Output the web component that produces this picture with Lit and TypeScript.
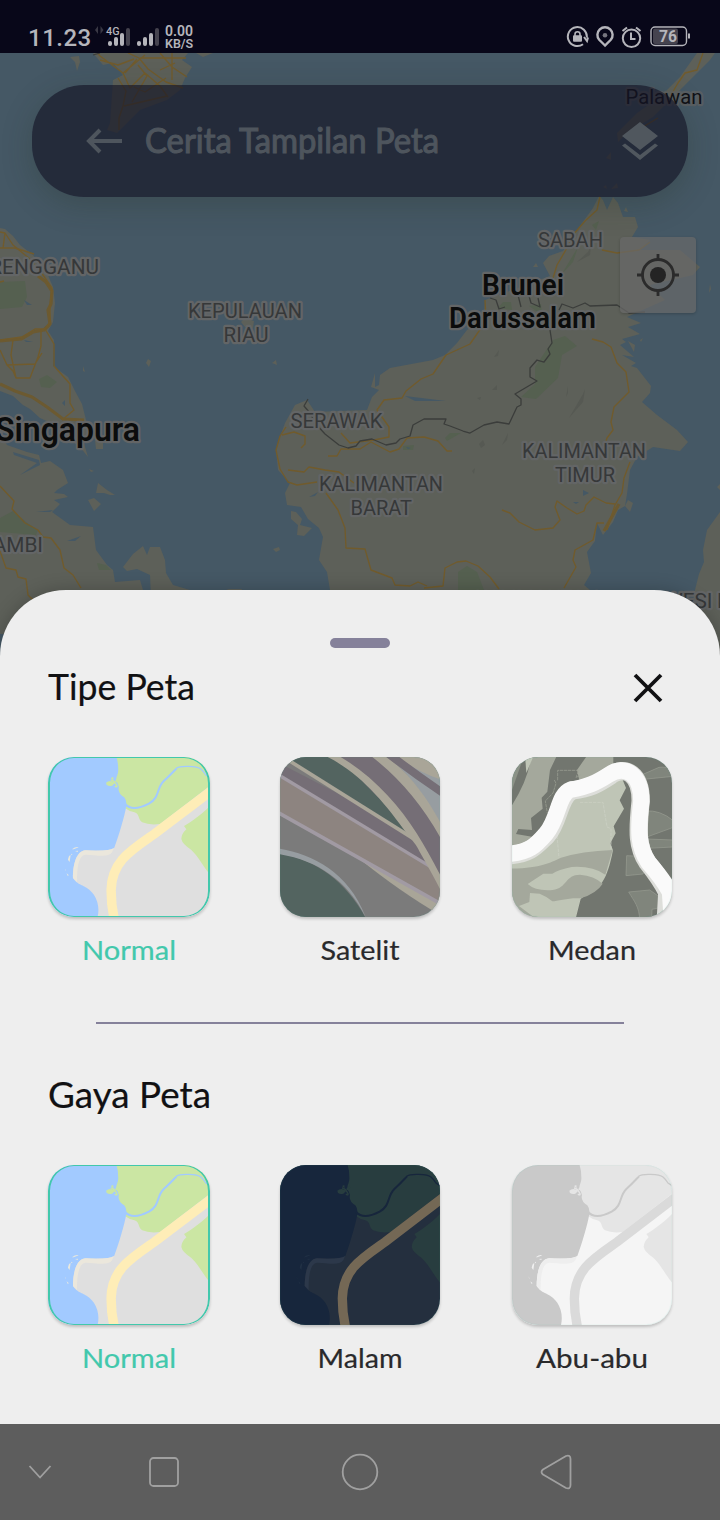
import { LitElement, html, svg, css } from "lit";
import { customElement, property } from "lit/decorators.js";

type Palette = { land: string; sea: string; park: string; road: string; shore: string; foam: string };

const PALETTES: Record<string, Palette> = {
  normal: { land: "#dfdfdf", sea: "#a2caff", park: "#cbe6a3", road: "#feedb7", shore: "#ebe7dc", foam: "#e8e8de" },
  night: { land: "#242f3e", sea: "#17263c", park: "#283d3f", road: "#746855", shore: "#2c384a", foam: "#203044" },
  gray: { land: "#f5f5f5", sea: "#c9c9c9", park: "#e5e5e5", road: "#dadada", shore: "#eeeeee", foam: "#efefef" },
};

const coastArt = (p: Palette) => svg`
  <g transform="translate(-58 -51)">
    <path fill=${p.land} d="M50 40H550V540H50Z"/>
    <path fill=${p.park} d="M255 40H550V128L390 252Q358 256 337 247C324 238 330 222 314 217Q298 214 287 205L240 150Z"/>
    <path fill=${p.park} d="M550 186C520 218 488 243 461 258L468 268Q453 282 453 297Q456 312 482 329C510 356 516 380 550 418Z"/>
    <path fill=${p.sea} d="M50 40H256Q266 58 266 88C268 105 253 116 264 130L268 141Q263 158 284 172Q292 182 290 198C284 233 268 286 254 324Q245 334 170 331C143 333 132 370 132 414C149 441 170 431 194 464Q215 497 203 540H50Z"/>
    <path fill=${p.shore} d="M253 324Q238 335 168 331C142 334 132 374 132 414L144 426Q143 346 169 344C198 344 235 355 248 337Z"/>
    <path fill="none" stroke=${p.sea} stroke-width="6" d="M286 192C306 214 338 201 357 191C391 171 378 146 401 123C420 106 432 92 439 85"/>
    <path fill="none" stroke=${p.sea} stroke-width="4" d="M438 85C448 76 500 78 511 87Q519 94 526 105L550 121"/>
    <path fill="none" stroke=${p.road} stroke-width="28" d="M561 138L373 282C305 330 246 364 245 451Q245 503 258 552"/>
    <g fill=${p.park}>
      <path d="M230 128Q241 118 257 128L248 137Q232 141 230 128Z"/>
      <path d="M244 114L251 111 252 121ZM256 124L266 113 269 119 261 127ZM254 139Q262 133 265 141L259 143Z"/>
    </g>
    <path fill="none" stroke=${p.park} stroke-width="4" d="M244 120Q255 121 263 139"/>
    <g fill=${p.foam}>
      <path d="M129 328Q141 319 149 322L134 328ZM138 333L147 332 146 336ZM126 343Q132 339 129 346ZM117 359Q120 345 125 346L122 366ZM108 385L111 393 109 391ZM113 400L120 406 116 407Z"/>
    </g>
  </g>`;

const satelliteArt = svg`
  <g transform="translate(-60 -51)">
    <path fill="#7b7b7b" d="M50 40H550V540H50Z"/>
    <path fill="#536460" d="M50 340C165 354 262 427 320 540H50Z"/>
    <path fill="#979da1" d="M50 325C150 340 263 391 317 531C260 418 169 359 50 341Z"/>
    <path fill="#a9a598" d="M290 350L550 475V530Q429 462 290 350Z"/>
    <path fill="#8d8480" d="M50 95L550 405V496L50 212Z"/>
    <path fill="none" stroke="#a19aa3" stroke-width="11" d="M48 214L550 496"/>
    <path fill="#756e76" d="M50 65L470 283 510 374 50 102Z"/>
    <path fill="none" stroke="#a19aa3" stroke-width="10" d="M50 101L515 382"/>
    <path fill="#536460" d="M80 40H210C300 91 383 180 447 287L94 65Z"/>
    <path fill="none" stroke="#a9a598" stroke-width="11" d="M78 56L470 302"/>
    <path fill="#756e76" d="M225 40H360L550 270V420L470 290Z"/>
    <path fill="#a9a598" d="M184 42H226C330 98 415 192 470 280Q510 344 550 424V466Q512 393 478 334C472 318 456 301 442 283C371 184 296 92 184 42Z"/>
    <path fill="#979da1" d="M370 40L550 118V270Q477 123 370 40Z"/>
    <path fill="#a9a598" d="M325 42H369C447 96 503 174 550 264V309Q461 143 325 42Z"/>
    <path fill="#a9a598" d="M405 40H550V121Q497 106 430 64Z"/>
    <path fill="none" stroke="#756e76" stroke-width="24" d="M376 34Q464 102 552 161"/>
  </g>`;

const terrainArt = svg`
  <g transform="translate(-66 -51)">
    <path fill="#72766f" d="M60 40H560V540H60Z"/>
    <path fill="#a4a89c" d="M124 40H204L180 90 172 155 155 173 158 206 123 234 126 270 85 267 78 282 126 290 110 318 60 330V205Q119 115 124 40Z"/>
    <path fill="#8c9287" d="M60 115L85 70 96 65 66 150Z"/>
    <path fill="#bfc5b6" d="M106 58L132 45 109 99Z"/>
    <path fill="#a4a89c" d="M296 40H370V74L270 130 261 90Z"/>
    <path fill="#bfc5b6" d="M60 335L150 310 235 165 390 100 408 144 389 181 402 206 371 259 377 280 361 310 369 331C360 375 346 448 290 463L272 477 256 540H60Z"/>
    <path fill="#a4a89c" d="M60 386C155 384 177 369 213 353Q274 334 368 330L346 404Q307 377 245 381Q205 389 187 401H160L113 432Q137 454 188 450C232 444 225 404 270 404Q312 407 338 431Q321 459 272 475C240 472 203 483 187 484Q170 469 149 461L120 459 118 486 87 498 136 535H60Z"/>
    <path fill="#80857c" stroke="#989d92" stroke-width="2" d="M452 106L507 82Q532 79 550 91V109L470 117ZM466 213Q510 209 550 242V262L468 292ZM471 297L550 300V321L471 325ZM410 347L432 348 464 390 459 402 408 407ZM416 456L479 450 515 475 515 502 486 508 485 540H449C448 500 433 485 416 456Z"/>
    <path fill="none" stroke="#a0a597" stroke-width="2" stroke-dasharray="10 2" d="M203 121V91H266L258 113 273 104M193 120L198 130 189 159 166 183 172 219"/>
    <path fill="none" stroke="#cdd2c6" stroke-width="2" stroke-dasharray="10 3" d="M201 287L207 353M270 187L339 187 351 261 363 266 363 330"/>
    <path fill="none" stroke="#dddeda" stroke-width="55" d="M53 346C123 341 137 319 171 286C208 246 207 166 248 151C301 145 321 133 358 109C408 71 453 105 452 184C442 276 442 321 472 367Q512 417 532 457L527 550"/>
    <path fill="none" stroke="#fafafa" stroke-width="49" d="M53 342C119 337 138 316 168 281C207 235 203 163 242 149C294 140 321 127 355 105C407 70 454 105 454 184C443 276 445 321 475 367Q518 416 540 456L546 550"/>
  </g>`;

const ROADS = [
  "M0 232L5 233 13 245 30 259 43 275 52 288 50 305 50 322 45 329 35 329 22 337 0 340",
  "M0 248H15L34 254M5 233L3 248M0 282L4 281M0 350L7 365 13 371 16 378 30 378 38 357 41 346 41 329M7 365L35 364 42 353M13 340L11 355 16 378",
  "M45 329L54 344V366L70 384V403L74 410 62 420",
  "M0 486L14 501 12 509 25 523 38 530 43 537 51 538 60 550 64 568 73 575 81 588",
  "M0 551L6 568 16 570 18 577 26 579 28 595 33 600",
  "M282 435L294 432 305 436 305 444 301 448",
  "M286 427L280 436 276 450 280 469 288 482 297 485 317 482M288 470L304 472 309 467 325 470 339 472 354 483M328 456L337 456 341 449 360 449 371 442 390 452 399 449 407 438 424 437 438 441 447 451 452 451",
  "M341 433L350 443 374 440 389 437 389 427 377 410 384 400 402 398 406 391 421 379 433 374 446 355 470 344 486 321 485 300",
  "M553 278L557 265 567 248 572 236 585 221 597 210 600 197M602 250L617 253 639 250 650 242",
  "M326 493L338 510 345 528 346 548 365 549 367 556 371 570 392 578 395 585 410 586 418 582 427 586",
  "M424 588L443 586 445 568 457 562 466 561 478 566 490 577 499 589",
  "M592 339L603 342 611 347 617 363 626 372 629 392 614 407 611 422 613 430 607 438 602 454M630 462L624 478 622 493 615 505 607 530",
  "M502 510L510 513 519 522 535 530 553 528 560 520 555 507 557 501 567 508 577 514 584 511 586 505 594 497 606 503 615 504M604 523L597 523 593 540 575 550 573 560 576 567 564 588",
  "M88 41L100 56 123 73 130 88 145 73 160 86 168 97M128 53L139 58 148 69 166 82 183 88M123 73L145 55M160 53L172 67 187 77M100 60L118 65 134 59M137 59L125 73M118 78L126 91 123 106 119 118 119 130M124 106L167 96M132 102L147 76 138 65M160 70L175 63M134 87L145 92 166 78M140 58H186M172 53V80",
  "M703 53L697 70 685 73 678 83 671 95M658 118L641 128 627 135",
];

const TRUNKS = [
  "M38 276L46 282 52 291 51 304 48 310 50 324 44 330 33 332 21 339 0 341",
  "M0 384L15 391 32 397 47 407 63 419 84 420",
  "M619 504L604 531",
];

const LABELS: { t: string; x: number; y: number; w?: number; a?: string; c?: string }[] = [
  { t: "TERENGGANU", x: 99, y: 274, a: "end" },
  { t: "KEPULAUAN", x: 188, y: 318, w: 114 },
  { t: "RIAU", x: 223.5, y: 342, w: 45 },
  { t: "SERAWAK", x: 290.5, y: 428, w: 92 },
  { t: "KALIMANTAN", x: 319, y: 491, w: 124 },
  { t: "BARAT", x: 350.5, y: 515, w: 61.5 },
  { t: "KALIMANTAN", x: 522, y: 458, w: 124 },
  { t: "TIMUR", x: 555, y: 482, w: 60 },
  { t: "SABAH", x: 538, y: 247, w: 65 },
  { t: "JAMBI", x: 43, y: 552, a: "end" },
  { t: "KALIMANTAN", x: 475, y: 607, w: 124 },
  { t: "SULAWESI", x: 712.5, y: 608, a: "end" },
  { t: "BARAT", x: 717, y: 608 },
  { t: "Palawan", x: 625.5, y: 104, w: 77, c: "place" },
  { t: "Singapura", x: 140, y: 441, w: 145, a: "end", c: "big" },
  { t: "Brunei", x: 482, y: 295, w: 82, c: "country" },
  { t: "Darussalam", x: 449, y: 328, w: 147, c: "country" },
];

@customElement("map-backdrop")
export class MapBackdrop extends LitElement {
  static styles = css`
    :host { display: block; }
    svg { display: block; }
    .land { fill: #5d6059; }
    .park { fill: #556050; }
    .water { fill: #455865; }
    .road { fill: none; stroke: #715b2c; stroke-width: 1.35; stroke-linejoin: round; }
    .trunk { fill: none; stroke: #6c5a31; stroke-width: 3.2; stroke-linejoin: round; }
    .border { fill: none; stroke: #3b3d3b; stroke-width: 1.3; stroke-linejoin: round; }
    .hill { fill: #565953; }
    text { font-family: Roboto, sans-serif; font-size: 20.8px; fill: #363839; stroke: #636566; stroke-width: 4.5px; stroke-linejoin: round; paint-order: stroke; }
    .place { fill: #101116; stroke: rgba(95,97,98,.75); }
    .country { font-size: 29.5px; font-weight: 600; fill: #0b0c0c; }
    .big { font-size: 33px; font-weight: 600; fill: #0b0c0c; }
  `;
  render() {
    return html`<svg width="720" height="700" viewBox="0 53 720 700">
      <path class="water" d="M0 53H720V753H0Z"/>
      <g class="land">
        <path d="M93 53L103 65 113 63 123 75 113 80 110 123 107 130 117 133 130 120 140 110 167 100 180 90 185 78 192 67 182 60 188 53ZM70 57L79 56 80 62 77 71 75 62ZM196 53L203 57 213 53Z"/>
        <path d="M697 53L680 77 660 97 637 113 617 133 618 142 627 133 653 117 670 100 697 73 710 60 715 53ZM606 158L611 152 611 160ZM611 189L617 183 618 188ZM603 187L606 185 607 189ZM624 211L626 207 628 212Z"/>
        <path d="M0 228L5 229 13 236 20 245 33 255 47 273 53 287 55 303 53 322 48 331 54 340 53 366 68 377 75 391 82 404 87 424 88 435 83 440 88 457 80 447 66 437 53 424 40 418 30 409 23 405 13 396 0 391ZM95 440L103 443 103 449 96 449Z"/>
        <path d="M0 433L7 445 27 452 39 455 41 463 50 461 63 470 68 483 57 490 54 493 64 494 68 497 54 500 60 504 52 512 70 525 93 527 96 550 107 565 113 570 115 582 140 580 143 590 140 634H0Z"/>
        <path d="M123 567L133 554 143 546 147 555 150 547 160 547 165 560 166 573 173 585 190 590V620H152L150 575 137 569 127 571ZM88 500L94 498 101 504 94 511ZM98 483L107 490 115 495 110 495 104 493 96 493ZM89 469L94 471 91 472ZM146 363L148 359 151 361 149 367ZM83 366L85 372 83 371ZM241 322L245 318 254 321 253 328 245 327ZM272 363L276 360 277 365ZM273 549L279 547 280 550 276 552ZM226 589L242 589 240 594Z"/>
        <path d="M307 400L295 405 285 423 280 437 276 450 278 470 290 483 285 493 287 505 301 507 308 519 319 528 323 537 319 560 327 572 330 590V680H592L590 590 584 585 591 573 587 552 595 541 597 523 603 535 613 522 618 510 625 506 627 494 630 470 637 457 653 447 680 451 688 442 677 430 657 415 642 402 650 393 651 386 637 368 631 366 636 363 622 355 634 357 620 345 626 342 622 339 640 334 628 327 641 323 627 317 647 308 665 300 650 285 693 275 700 267 680 250 640 250 650 240 632 237 638 227 635 217 623 217 618 203 613 197 607 210 603 200 599 196 593 208 572 237 563 251 549 256 543 263 550 276 485 300 484 315 467 330 457 343 445 355 433 360 390 368 380 375 379 385 375 387 375 373 371 387 379 390 372 397 367 410 340 411 315 412Z"/>
        <path d="M291 511L296 512 302 519 300 525 312 528 304 536 297 535 298 525 291 519ZM628 341L635 345 634 352ZM628 500L633 503 630 512 625 506ZM640 340L643 338 641 342ZM710 284L711 289 709 293ZM533 267L536 263 538 267Z"/>
        <path d="M720 512L707 530 703 550 704 562 699 574 695 590 690 620 690 670H720ZM717 487L720 484V490Z"/>
      </g>
      <g class="park">
        <path d="M0 282L25 281 27 297 22 307 0 309ZM39 379L47 375 57 382 50 388 41 387ZM0 518L13 511 26 522 38 530 36 535 0 532ZM97 563L106 565 111 570 99 570Z"/>
        <path d="M565 336L577 346 562 355 558 378 536 399 521 397 535 384 535 367 553 340ZM503 302L511 302 512 310 498 308ZM529 306L541 304 542 315ZM566 267L578 247 573 262 561 275ZM592 225L599 221 596 230ZM445 438L450 433 461 433 447 441ZM403 446L414 445 413 450 403 450ZM458 572L467 566 477 572 484 590H458Z"/>
      </g>
      <g class="hill">
        <path d="M494 357L499 350 498 356ZM492 390L497 385 497 390ZM477 398L481 397 480 400ZM566 397L568 386 568 393ZM569 418L583 394 585 389 583 402ZM479 444L483 440 485 445 481 448ZM502 445L508 433 507 440ZM472 471L475 468 474 474ZM577 262L588 252 591 246 590 255Z"/>
      </g>
      <g class="water">
        <path d="M24 300L32 305 27 305ZM62 403L65 400 65 406ZM13 452L39 460 40 465 20 475 37 463 14 455ZM36 512L53 510 50 512ZM67 541L81 536 75 541ZM309 497L318 492 315 496ZM359 522L363 516 361 519ZM583 490L589 493 583 496ZM573 502L579 502 576 504ZM24 340L33 342 26 342Z"/>
        <path d="M405 396L446 401 415 401ZM406 447L411 448 408 449Z"/>
      </g>
      ${TRUNKS.map((d) => svg`<path class="trunk" d=${d}/>`)}
      ${ROADS.map((d) => svg`<path class="road" d=${d}/>`)}
      <path class="border" d="M308 399L304 406 310 413 315 423 325 434 339 445 348 448 356 446 360 441 372 439 386 445 396 443 400 439 410 436 413 425 424 419 446 419 444 424 450 426 463 431 470 433 484 425 497 422 509 424 517 407 521 405 521 399 515 394 537 381 530 377 530 368 537 360 544 362 550 354 548 349 552 343 550 330 553 325M559 310L562 304 573 308 585 303 590 306 617 305 629 313 645 312M490 298L496 300 499 309 505 307M518 295L521 307M529 296L531 303 540 307 538 298"/>
      <path class="border" d="M93 55L100 53"/>
      ${LABELS.map((l) => l.w
        ? svg`<text class=${l.c ?? "region"} x=${l.x} y=${l.y} text-anchor=${l.a ?? "start"} textLength=${l.w} lengthAdjust="spacingAndGlyphs">${l.t}</text>`
        : svg`<text class=${l.c ?? "region"} x=${l.x} y=${l.y} text-anchor=${l.a ?? "start"}>${l.t}</text>`)}
    </svg>`;
  }
}

@customElement("status-bar")
export class StatusBar extends LitElement {
  static styles = css`
    :host { display: flex; height: 53px; box-sizing: border-box; padding: 22px 29px 0 28px; justify-content: space-between; background: #080719; color: #b5b5bb; font-family: Roboto, sans-serif; }
    .side { display: flex; align-items: flex-start; }
    .time { font-size: 24px; line-height: 32px; font-weight: 500; width: 63px; letter-spacing: 0.5px; white-space: nowrap; }
    .rate { font-size: 14px; line-height: 13px; font-weight: 600; margin: 3px 0 0 6px; white-space: nowrap; }
    .rate div:last-child { font-size: 12.5px; line-height: 12px; }
    svg { display: block; }
    .net { font: 500 11.5px Roboto, sans-serif; fill: #b5b5bb; }
    .pct { font: 700 16px Roboto, sans-serif; fill: #b5b5bb; }
  `;
  render() {
    return html`
      <div class="side">
        <div class="time">11.23</div>
        <svg width="68" height="31" viewBox="91 22 68 31" fill="#b5b5bb">
          <path d="M95 30L98 26V34ZM103.500 30L100.500 26V34Z" fill="#393844"/>
          <text class="net" x="106" y="35" textLength="13.5" lengthAdjust="spacingAndGlyphs">4G</text>
          <rect x="108" y="41" width="4" height="5" rx="2"/><rect x="114" y="37" width="4" height="9" rx="2"/><rect x="120" y="33" width="4" height="13" rx="2"/><rect x="126" y="28" width="4" height="18" rx="2" fill="#45434f"/>
          <rect x="137" y="41" width="4" height="5" rx="2"/><rect x="143" y="37" width="4" height="9" rx="2"/><rect x="149" y="33" width="4" height="13" rx="2"/><rect x="155" y="28" width="4" height="18" rx="2" fill="#45434f"/>
        </svg>
        <div class="rate"><div>0.00</div><div>KB/S</div></div>
      </div>
      <svg width="125" height="31" viewBox="566 22 125 31" fill="none" stroke="#b5b5bb" stroke-width="2">
        <path d="M583 44.200A9.500 9.500 0 1 1 586.8 37.500M584 37L587 41 588 37.500"/>
        <rect x="573" y="35.200" width="9" height="6.500" rx="1" fill="#b5b5bb" stroke="none"/><path d="M575 36V34.300A2.500 2.500 0 0 1 580 34.300V36" stroke-width="1.6"/>
        <path stroke-width="2.4" d="M605 45.500L599.200 39.800A7.600 7.600 0 1 1 610.800 39.800Z"/><circle cx="605" cy="35.300" r="2.300" fill="#77767f" stroke="none"/>
        <circle cx="631.5" cy="38.3" r="8.7"/><path d="M631 32.5V39H635.5M622.5 31L627 27.5M640.5 31L636 27.5"/>
        <rect x="651" y="27" width="35.5" height="18.5" rx="4" stroke-width="1.4"/>
        <rect x="653" y="28.5" width="25" height="15.5" rx="2" fill="#45434f" stroke="none"/><path d="M689 33.5V38.5"/>
        <text class="pct" x="659" y="42.3" stroke="none" textLength="18" lengthAdjust="spacingAndGlyphs">76</text>
      </svg>`;
  }
}

@customElement("map-option")
export class MapOption extends LitElement {
  @property() label = "";
  @property() art = "normal";
  @property({ type: Boolean, reflect: true }) selected = false;
  @property({ type: Number }) span = 90;
  static styles = css`
    :host { display: block; width: 160px; }
    :host([selected]) { width: 162px; }
    .card { height: 160px; border-radius: 26px; overflow: hidden; box-shadow: 0 2px 3px rgba(0,0,0,.2); display: grid; }
    .card svg { grid-area: 1 / 1; display: block; width: 100%; height: 160px; }
    .frame { grid-area: 1 / 1; border-radius: 26px; border: 0 solid transparent; }
    :host([selected]) .frame { border: solid #42c8ac; border-width: 1px 2px; }
    .tint { box-shadow: inset 0 0 1px rgba(66,200,172,.45); }
    .label { display: block; margin-top: 14px; width: 100%; height: 40px; }
    text { font-family: Lato, sans-serif; font-size: 27.5px; fill: #29292b; stroke: #29292b; stroke-width: .2px; }
    :host([selected]) text { fill: #42c8ac; stroke: #42c8ac; }
  `;
  render() {
    const art = this.art === "satellite" ? satelliteArt : this.art === "terrain" ? terrainArt : coastArt(PALETTES[this.art]);
    const w = this.selected ? 162 : 160;
    return html`
      <div class="card">
        <svg viewBox="0 0 480 480" preserveAspectRatio="none">${art}</svg>
        <div class="frame ${this.selected ? "" : "tint"}"></div>
      </div>
      <svg class="label" viewBox="0 0 ${w} 40"><text x=${w / 2} y="29" text-anchor="middle" textLength=${this.span} lengthAdjust="spacingAndGlyphs">${this.label}</text></svg>`;
  }
}

@customElement("app-root")
export class AppRoot extends LitElement {
  static styles = css`
    :host { display: grid; grid-template-rows: 53px 1371px 96px; width: 720px; height: 1520px; overflow: hidden; font-family: Lato, sans-serif; }
    .stage { display: grid; grid-template: 1371px / 720px; background: #455865; }
    .stage > * { grid-area: 1 / 1; }
    .layer { display: flex; flex-direction: column; z-index: 1; }
    .bar { margin: 32px 32px 0; height: 112px; box-sizing: border-box; border-radius: 52px; background: rgba(20,19,36,.66); padding: 0 27px 0 52px; display: flex; align-items: center; box-shadow: 0 8px 30px rgba(35,45,30,.26); }
    .bar h1 { flex: 1; margin: 0 0 0 20px; }
    .bar svg, .close { display: block; }
    h1, h2 { font-weight: 400; line-height: 0; }
    h1 svg { overflow: visible; }
    h1 text { font-size: 34px; fill: #4e555d; stroke: #4e555d; stroke-width: 1.1px; }
    h2 text { font-size: 36px; fill: #111113; stroke: #111113; stroke-width: .2px; }
    .locate { align-self: flex-end; margin: 40px 24px 0 0; width: 76px; height: 76px; border-radius: 4px; background: rgba(105,105,105,.7); box-shadow: 0 1px 3px rgba(0,0,0,.2); display: grid; place-items: center; }
    .sheet { margin-top: 277px; height: 834px; box-sizing: border-box; background: #eee; border-radius: 66px 66px 0 0; padding: 48px 48px 0; display: flex; flex-direction: column; box-shadow: 0 0 18px rgba(0,0,0,.22); }
    .grip { align-self: center; width: 60px; height: 10px; border-radius: 5px; background: #85819a; }
    .head { display: flex; justify-content: space-between; align-items: center; height: 48px; margin-top: 16px; }
    .head h2, .second { margin: 0; }
    .close { margin-right: 8px; }
    .row { display: grid; grid-template-columns: repeat(3, 160px); gap: 72px; margin-top: 45px; height: 214px; }
    .rule { height: 2px; background: #85819a; margin: 51px 48px 0; }
    .second { height: 48px; margin-top: 48px; }
    .second + .row { margin-top: 45px; }
    .nav { background: #5d5d5d; position: relative; z-index: 2; }
  `;
  render() {
    return html`
      <status-bar></status-bar>
      <main class="stage">
        <map-backdrop></map-backdrop>
        <div class="layer">
          <header class="bar">
            <svg width="40" height="28" viewBox="84 127 40 28" fill="none" stroke="#4e555d" stroke-width="4"><path d="M122 141H89M100 130L89 141 100 152"/></svg>
            <h1><svg width="300" height="48"><text x="1" y="36" textLength="294" lengthAdjust="spacingAndGlyphs">Cerita Tampilan Peta</text></svg></h1>
            <svg width="42" height="42" viewBox="619 119 42 42" fill="#50575e"><path d="M640 121L658 135 640 149 622 135ZM622 144.5L625 142.5 640 154 655 142.5 658 144.5 640 159Z"/></svg>
          </header>
          <div class="locate"><svg width="44" height="44" viewBox="-22 -22 44 44" fill="none" stroke="#2b2b2b" stroke-width="2.8"><circle r="15.5"/><circle r="8" fill="#242424" stroke="none"/><path d="M0-21V-15M0 21V15M-21 0H-15M21 0H15"/></svg></div>
          <section class="sheet">
            <div class="grip"></div>
            <div class="head">
              <h2><svg width="200" height="48"><text x="0" y="36" textLength="147" lengthAdjust="spacingAndGlyphs">Tipe Peta</text></svg></h2>
              <svg class="close" width="32" height="32" viewBox="-16 -16 32 32" stroke="#111113" stroke-width="3.8"><path d="M-13-13L13 13M13-13L-13 13"/></svg>
            </div>
            <div class="row">
              <map-option label="Normal" art="normal" selected span="94"></map-option>
              <map-option label="Satelit" art="satellite" span="79"></map-option>
              <map-option label="Medan" art="terrain" span="88"></map-option>
            </div>
            <div class="rule"></div>
            <h2 class="second"><svg width="200" height="48"><text x="0" y="36" textLength="163" lengthAdjust="spacingAndGlyphs">Gaya Peta</text></svg></h2>
            <div class="row">
              <map-option label="Normal" art="normal" selected span="94"></map-option>
              <map-option label="Malam" art="night" span="85"></map-option>
              <map-option label="Abu-abu" art="gray" span="112"></map-option>
            </div>
          </section>
        </div>
      </main>
      <nav class="nav"><svg width="720" height="96" viewBox="0 1424 720 96" fill="none" stroke="#a0a0a0" stroke-width="1.8" stroke-linejoin="round">
        <path d="M29.5 1466L40 1477.5 50.5 1466"/>
        <rect x="150" y="1458" width="28" height="28" rx="3.5"/>
        <circle cx="360" cy="1472" r="17.3"/>
        <path d="M543 1469.5L566 1456Q570.5 1454.5 570.5 1459V1485Q570.5 1489.500 566 1488L543 1474.500Q540 1472 543 1469.500Z"/>
      </svg></nav>`;
  }
}
